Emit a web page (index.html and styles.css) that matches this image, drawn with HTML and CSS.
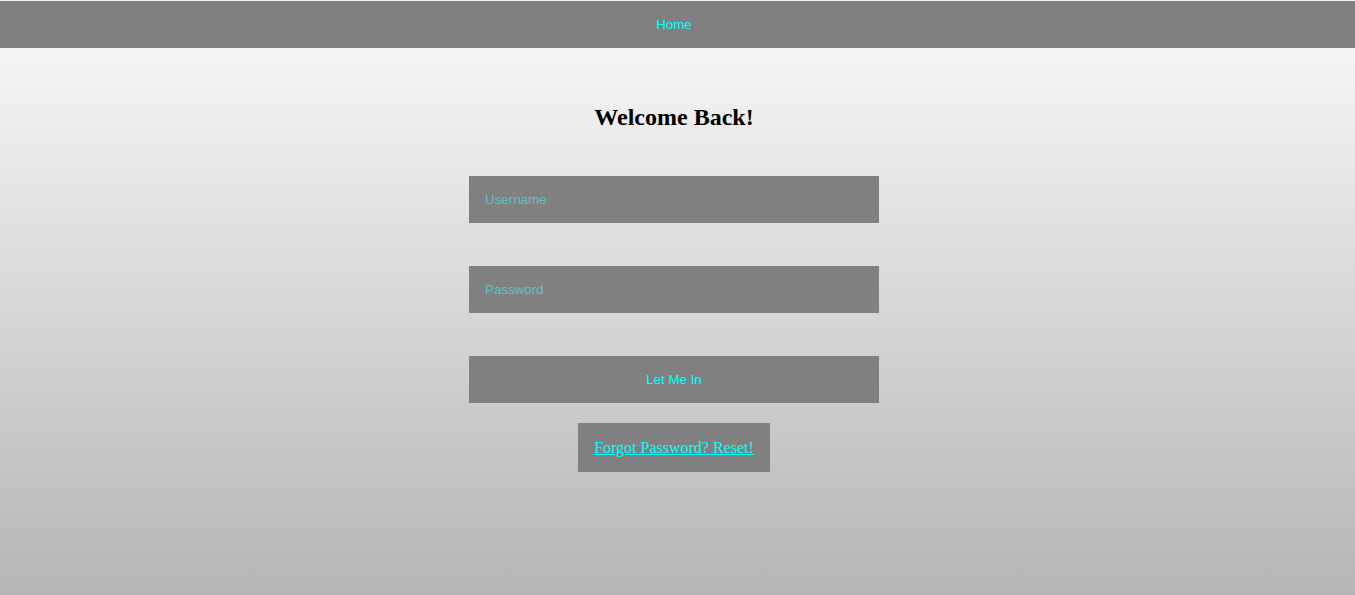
FILE: index.html
```html
<!DOCTYPE html>
<html>
<head>
<meta charset="utf-8">
<link rel="stylesheet" href="styles.css">
</head>
<body>
<nav class="nav"><a class="nav-link" href="#">Home</a></nav>
<main class="main">
  <h2 class="title">Welcome Back!</h2>
  <form class="form">
    <input class="field" type="text" placeholder="Username">
    <input class="field" type="password" placeholder="Password">
    <button class="btn" type="button">Let Me In</button>
  </form>
  <div class="forgot"><a class="forgot-link" href="#">Forgot Password? Reset!</a></div>
</main>
</body>
</html>
```
FILE: styles.css
```css
html, body {
  margin: 0;
  height: 100%;
}
body {
  padding-top: 1px;
  box-sizing: border-box;
  background: linear-gradient(to bottom, #f5f5f5 0px, #f5f5f5 48px, #b5b5b5 100%);
  font-family: "Liberation Serif", serif;
  min-height: 595px;
}
.nav {
  height: 47px;
  background: #808080;
  display: flex;
  align-items: center;
  justify-content: center;
  padding-right: 7px;
}
.nav-link {
  color: #00ffff;
  text-decoration: none;
  font-family: "Liberation Sans", Arial, sans-serif;
  font-size: 13.333px;
  line-height: 15px;
}
.main {
  display: flex;
  flex-direction: column;
  align-items: center;
  padding-top: 55px;
  padding-right: 7px;
}
.title {
  margin: 0;
  font-size: 24px;
  line-height: 28px;
  font-weight: bold;
  color: #000;
}
.form {
  margin-top: 45px;
  display: flex;
  flex-direction: column;
  gap: 43px;
  width: 410px;
}
.field, .btn {
  height: 47px;
  box-sizing: border-box;
  border: none;
  outline: none;
  background: #808080;
  font-family: "Liberation Sans", Arial, sans-serif;
  font-size: 13.333px;
  margin: 0;
}
.field {
  padding: 0 16px;
  color: #00ffff;
}
.field::placeholder {
  color: #5fc0c0;
  opacity: 1;
}
.btn {
  color: #00ffff;
  text-align: center;
  cursor: pointer;
}
.forgot {
  margin-top: 20px;
  background: #808080;
  padding: 16px;
  line-height: 17px;
}
.forgot-link {
  color: #00ffff;
  font-size: 16px;
}
```
